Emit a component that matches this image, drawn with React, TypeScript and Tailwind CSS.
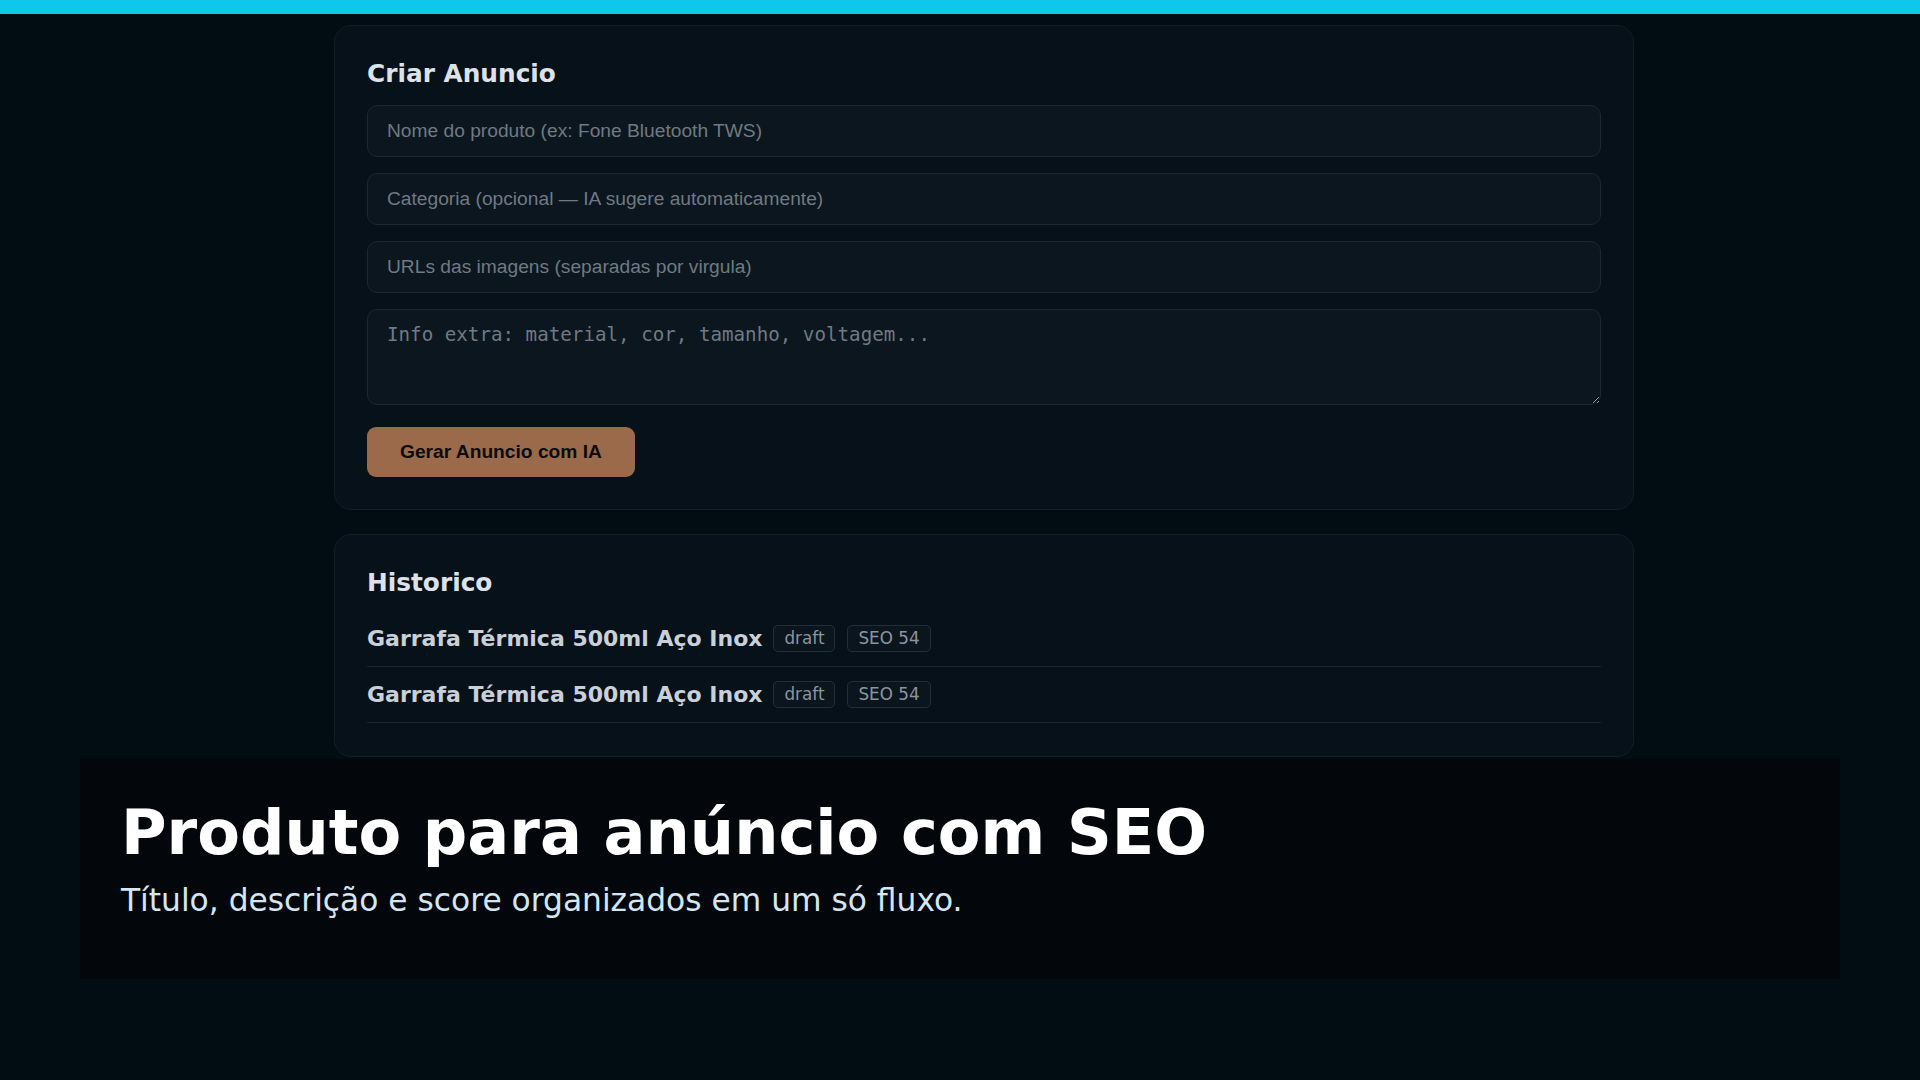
const dejavu = "font-['DejaVu_Sans',sans-serif]";

const history = [
  { title: "Garrafa Térmica 500ml Aço Inox", status: "draft", seo: 54 },
  { title: "Garrafa Térmica 500ml Aço Inox", status: "draft", seo: 54 },
];

function Badge({ children }: { children: React.ReactNode }) {
  return (
    <span className="flex h-[27px] items-center rounded-[5px] border border-[#222e38] bg-[#0b151d] px-[10px] text-[16.8px] text-[#8a959f]">
      {children}
    </span>
  );
}

const inputCls =
  "h-[52px] w-full rounded-[10px] border border-[#1b2832] bg-[#0b161e] px-[19px] text-[19.2px] text-[#d0d6dc] outline-none placeholder:text-[#6f7a84] font-['Liberation_Sans',Arial,sans-serif]";

export default function App() {
  return (
    <div className="min-h-[1080px] w-full bg-[#020c13]">
      <div className="h-[14px] w-full bg-[#0ec8ec]" />

      <div className="ml-[334px] mt-[11px] flex w-[1300px] flex-col gap-[24px]">
        {/* Criar */}
        <section className="rounded-[17px] border border-[#121e27] bg-[#06111a] px-[32px] pb-[32px] pt-[32px]">
          <h2 className={`${dejavu} mb-[15px] text-[24.8px] font-bold leading-[32px] text-[#dce2e8]`}>
            Criar Anuncio
          </h2>
          <div className="flex flex-col gap-[16px]">
            <input className={inputCls} placeholder="Nome do produto (ex: Fone Bluetooth TWS)" />
            <input className={inputCls} placeholder="Categoria (opcional — IA sugere automaticamente)" />
            <input className={inputCls} placeholder="URLs das imagens (separadas por virgula)" />
            <textarea
              className="block h-[96px] w-full resize-y rounded-[10px] border border-[#1b2832] bg-[#0b161e] px-[19px] py-[11px] text-[19.2px] leading-[28.8px] text-[#d0d6dc] outline-none placeholder:text-[#6f7a84] font-['DejaVu_Sans_Mono',monospace]"
              placeholder="Info extra: material, cor, tamanho, voltagem..."
            />
          </div>
          <button className="mt-[22px] h-[50px] rounded-[9px] bg-[#9b6a4a] px-[33px] text-[19.2px] font-bold text-[#0b0b0b] font-['Liberation_Sans',Arial,sans-serif]">
            Gerar Anuncio com IA
          </button>
        </section>

        {/* Historico */}
        <section className="rounded-[17px] border border-[#121e27] bg-[#06111a] px-[32px] pb-[33px] pt-[32px]">
          <h2 className={`${dejavu} mb-[12px] text-[24.8px] font-bold leading-[32px] text-[#dce2e8]`}>
            Historico
          </h2>
          <ul className={dejavu}>
            {history.map((h, i) => (
              <li key={i} className="flex h-[56px] items-center gap-[11px] border-b border-[#18242d]">
                <span className="text-[22px] font-bold leading-[32px] text-[#c9d0d7]">{h.title}</span>
                <div className="flex gap-[12px]">
                  <Badge>{h.status}</Badge>
                  <Badge>SEO {h.seo}</Badge>
                </div>
              </li>
            ))}
          </ul>
        </section>
      </div>

      {/* caption */}
      <div className={`${dejavu} mx-[80px] mt-[2px] h-[220px] bg-[#03070b] pl-[41px] pt-[37px]`}>
        <h1 className="text-[62.2px] font-bold leading-[74.4px] text-white">Produto para anúncio com SEO</h1>
        <p className="mt-[9px] text-[31.3px] leading-[43.4px] text-[#d3e6f2]">
          Título, descrição e score organizados em um só fluxo.
        </p>
      </div>
    </div>
  );
}
